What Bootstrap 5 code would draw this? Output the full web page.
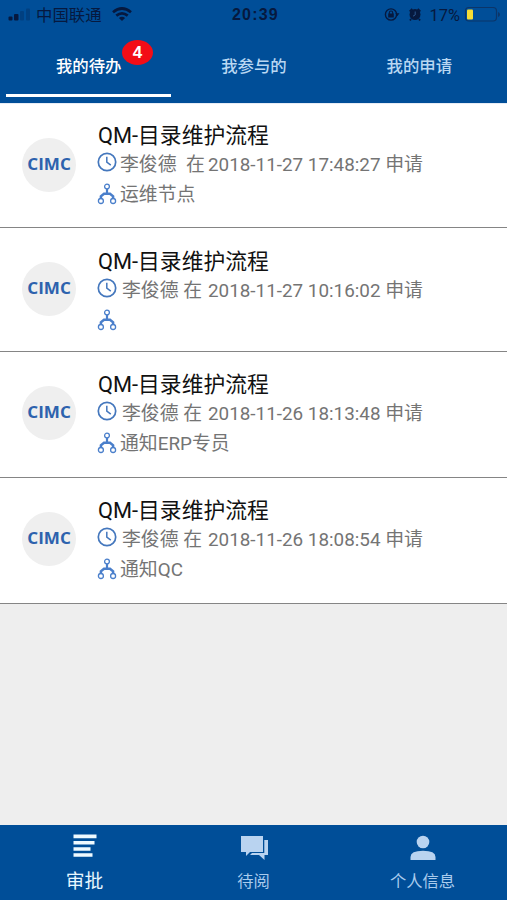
<!DOCTYPE html>
<html lang="zh-CN">
<head>
<meta charset="utf-8">
<meta name="viewport" content="width=device-width, initial-scale=1">
<title>审批</title>
<link href="https://cdn.jsdelivr.net/npm/bootstrap@5.3.0/dist/css/bootstrap.min.css" rel="stylesheet">
<style>
body{font-family:Roboto,"Noto Sans CJK SC",sans-serif;background:#eee;height:900px;overflow:hidden}
svg{display:block;flex:none}
.brand-bg{background:#004e98}
.status{height:30px;color:#06193f;font-size:16.4px;line-height:31px}
.status .clock{font:700 16px/30px "Liberation Sans",sans-serif;letter-spacing:1.2px;left:232px;top:0}
.tabs{height:73px;padding:0 5px 0 6px}
.tabs a{color:#b9d7f2;font-size:16.4px;font-weight:500;height:67px;line-height:24px;padding-top:25px;text-align:center;text-decoration:none;border-bottom:3px solid transparent}
.tabs a.active{color:#fff;border-color:#fff}
.count{left:122px;top:10px;width:31px;height:25px;border-radius:50%;background:#f30d16;font:700 17px/25px "Liberation Sans",sans-serif}
.tasks{border-top:1px solid #e6ecf5}
.task{height:124px;border-bottom:1.5px solid #858585;padding-left:22px}
.task.tall{height:126px}
.logo{width:54px;height:54px;margin-top:34px;margin-right:22px;border-radius:50%;background:#efefef}
.body-first{padding-top:18px}
.body-low{padding-top:20px}
.body-mid{padding-top:19px}
.task h2{font-size:21.8px;font-weight:400;line-height:28px;color:#111;white-space:nowrap}
.line{font-size:18.85px;line-height:30px;height:30px;color:#747474;white-space:pre}
.line .who{width:88px;flex:none}
.line .who.late{padding-left:2px}
.line svg{margin:2px 3px 0 -1px}
.line.node svg{margin-top:3px}
.bottom{height:75px}
.bottom a{color:#a9cbed;font-size:16.3px;text-decoration:none;line-height:24px}
.bottom a.active{color:#e8f7ff;font-size:18.8px}
.bottom svg{height:38px;margin-bottom:3px}
</style>
</head>
<body class="d-flex flex-column">
<svg width="0" height="0" class="position-absolute">
<defs>
<symbol id="clock" viewBox="0 0 20 20"><circle cx="10" cy="10" r="8.7" fill="none" stroke="#4477bd" stroke-width="1.7"/><path d="M9.8 4.8v5.4l4 3" fill="none" stroke="#4477bd" stroke-width="1.5"/></symbol>
<symbol id="flow" viewBox="0 0 20 22"><g fill="none" stroke="#4a7fcb"><path d="M10 6v4.5" stroke-width="2.2"/><path d="M3.9 15.6v-2.3L7 10.7h6l3.1 2.6v2.3" stroke-width="2.5"/><circle cx="10" cy="3.6" r="2.4" stroke-width="1.3"/><circle cx="3.9" cy="18" r="2.5" stroke-width="1.3"/><circle cx="16.1" cy="18" r="2.5" stroke-width="1.3"/></g></symbol>
<symbol id="cimc" viewBox="0 0 54 54"><text x="5.3" y="31.7" font-family="Open Sans,sans-serif" font-weight="700" font-size="15.6" textLength="43.5" lengthAdjust="spacingAndGlyphs" fill="#2d62ad">CIMC</text></symbol>
</defs>
</svg>

<header class="brand-bg flex-shrink-0">
<div class="status d-flex position-relative">
<svg width="36" height="30"><g fill="#06193f"><rect x="8.5" y="16.5" width="4" height="4" rx="1"/><rect x="14" y="14" width="4.5" height="6.5" rx="1"/><g opacity=".25"><rect x="20" y="11" width="4" height="9.5" rx="1"/><rect x="26" y="8.5" width="4" height="12" rx="1"/></g></g></svg>
<span>中国联通</span>
<svg width="30" height="30" class="ms-1"><g fill="none" stroke="#06193f" stroke-width="2.7"><path d="M7 12.2Q16 4.8 25 12.2M10.3 15.6Q16 11 21.7 15.6"/></g><path d="M12.9 18Q16 15.6 19.1 18L16 21z" fill="#06193f"/></svg>
<span class="clock position-absolute">20:39</span>
<div class="d-flex ms-auto">
<svg width="46" height="30"><circle cx="7" cy="14.5" r="5.6" fill="none" stroke="#06193f" stroke-width="1.4"/><path d="M11.3 13.2h4.2l-2.2 3z" fill="#06193f"/><rect x="4.2" y="13.5" width="5.6" height="4" fill="#06193f"/><path d="M5.3 14v-1.3a1.7 1.7 0 0 1 3.4 0V14" fill="none" stroke="#06193f" stroke-width="1.1"/><circle cx="31" cy="14.6" r="5.5" fill="#06193f"/><path d="M25.7 11.5l2.6-2.6M36.3 11.5l-2.6-2.6M27 19l-1 1.5M35 19l1 1.5" stroke="#06193f" stroke-width="1.8"/><path d="M31.2 11.5v3.4l-2.2 1.3" fill="none" stroke="#2c5790" stroke-width="1"/></svg>
<span>17%</span>
<svg width="47" height="30"><rect x="5.5" y="7.5" width="31" height="13.5" rx="3.5" fill="none" stroke="#0b3569" stroke-width="1.2"/><rect x="7" y="9.5" width="6" height="10" rx="1" fill="#f5dd35"/><path d="M38 12v5q2-.8 2-2.5T38 12" fill="#0b3569"/></svg>
</div>
</div>
<nav class="tabs d-flex position-relative">
<a href="#" class="active col-4">我的待办</a><a href="#" class="col-4">我参与的</a><a href="#" class="col-4">我的申请</a>
<span class="count position-absolute text-white text-center">4</span>
</nav>
</header>

<main class="tasks flex-grow-1">
<article class="task bg-white d-flex">
<div class="logo flex-shrink-0"><svg width="54" height="54"><use href="#cimc"/></svg></div>
<div class="body-first"><h2 class="mb-0">QM-目录维护流程</h2>
<div class="line d-flex"><svg width="20" height="20"><use href="#clock"/></svg><span class="who">李俊德  在 </span><span>2018-11-27 17:48:27 申请</span></div>
<div class="line node d-flex"><svg width="20" height="22"><use href="#flow"/></svg><span>运维节点</span></div></div>
</article>
<article class="task bg-white d-flex">
<div class="logo flex-shrink-0"><svg width="54" height="54"><use href="#cimc"/></svg></div>
<div class="body-low"><h2 class="mb-0">QM-目录维护流程</h2>
<div class="line d-flex"><svg width="20" height="20"><use href="#clock"/></svg><span class="who late">李俊德 在 </span><span>2018-11-27 10:16:02 申请</span></div>
<div class="line node d-flex"><svg width="20" height="22"><use href="#flow"/></svg></div></div>
</article>
<article class="task tall bg-white d-flex">
<div class="logo flex-shrink-0"><svg width="54" height="54"><use href="#cimc"/></svg></div>
<div class="body-mid"><h2 class="mb-0">QM-目录维护流程</h2>
<div class="line d-flex"><svg width="20" height="20"><use href="#clock"/></svg><span class="who late">李俊德 在 </span><span>2018-11-26 18:13:48 申请</span></div>
<div class="line node d-flex"><svg width="20" height="22"><use href="#flow"/></svg><span>通知ERP专员</span></div></div>
</article>
<article class="task tall bg-white d-flex">
<div class="logo flex-shrink-0"><svg width="54" height="54"><use href="#cimc"/></svg></div>
<div class="body-mid"><h2 class="mb-0">QM-目录维护流程</h2>
<div class="line d-flex"><svg width="20" height="20"><use href="#clock"/></svg><span class="who late">李俊德 在 </span><span>2018-11-26 18:08:54 申请</span></div>
<div class="line node d-flex"><svg width="20" height="22"><use href="#flow"/></svg><span>通知QC</span></div></div>
</article>
</main>

<nav class="bottom brand-bg d-flex flex-shrink-0">
<a href="#" class="active col-4 d-flex flex-column align-items-center pt-1"><svg width="24" height="38" viewBox="0 0 24 38"><path d="M.5 5.5h23v3.7H.5zM.5 12h21v3.5H.5zM.5 18.2h17v3.5H.5zM.5 24.2h19v3.5H.5z" fill="#effaff"/></svg><span>审批</span></a>
<a href="#" class="col-4 d-flex flex-column align-items-center pt-1"><svg width="28" height="38" viewBox="0 0 28 38"><path d="M1 7h22v16H10l-4 4v-4H1zM24.3 11H28v15h-3.5v5l-5.5-5h-9l2-2h12.3z" fill="#b9d3f0"/></svg><span>待阅</span></a>
<a href="#" class="col-4 d-flex flex-column align-items-center pt-1"><svg width="26" height="38" viewBox="0 0 26 38"><circle cx="13" cy="13" r="6.3" fill="#b9d3f0"/><path d="M.5 31v-3q0-6.2 12.5-6.2T25.5 28v3z" fill="#b9d3f0"/></svg><span>个人信息</span></a>
</nav>
<script src="https://cdn.jsdelivr.net/npm/bootstrap@5.3.0/dist/js/bootstrap.bundle.min.js"></script>
</body>
</html>
